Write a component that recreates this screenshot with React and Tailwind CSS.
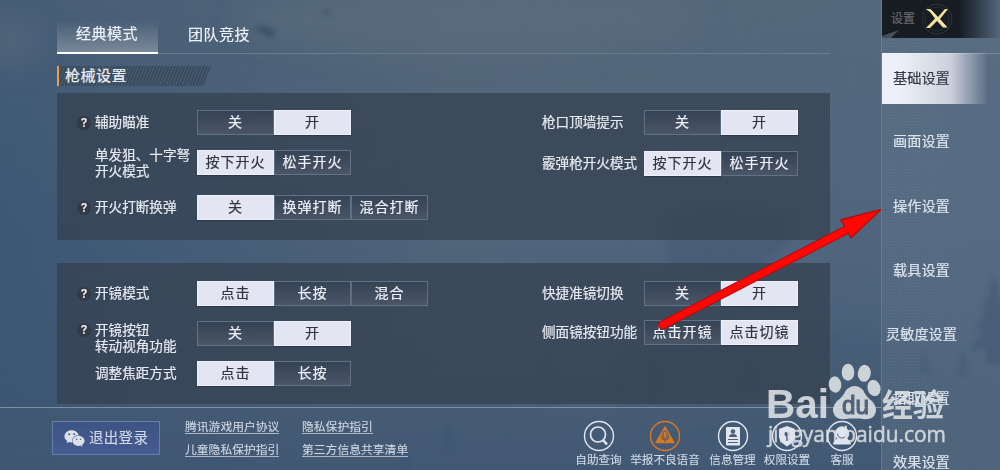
import React from "react";
import { FaWeixin } from "react-icons/fa";

const leftSettings = {
  weapon: [
    { y: "mt-[17px]", help: true, lines: ["辅助瞄准"], options: ["关", "开"], active: 1 },
    { y: "mt-[15px]", lines: ["单发狙、十字弩", "开火模式"], options: ["按下开火", "松手开火"], active: 0 },
    { y: "mt-[20px]", help: true, lines: ["开火打断换弹"], options: ["关", "换弹打断", "混合打断"], active: 0 },
  ],
  scope: [
    { y: "mt-[18px]", help: true, lines: ["开镜模式"], options: ["点击", "长按", "混合"], active: 0 },
    { y: "mt-[15px]", help: true, low: true, lines: ["开镜按钮", "转动视角功能"], options: ["关", "开"], active: 1 },
    { y: "mt-[15px]", lines: ["调整焦距方式"], options: ["点击", "长按"], active: 0 },
  ],
};

const rightSettings = {
  weapon: [
    { y: "mt-[17px]", lines: ["枪口顶墙提示"], options: ["关", "开"], active: 1 },
    { y: "mt-[16px]", lines: ["霰弹枪开火模式"], options: ["按下开火", "松手开火"], active: 0 },
  ],
  scope: [
    { y: "mt-[18px]", lines: ["快捷准镜切换"], options: ["关", "开"], active: 1 },
    { y: "mt-[14px]", lines: ["侧面镜按钮功能"], options: ["点击开镜", "点击切镜"], active: 1 },
  ],
};

function Tree({ x, y, s, o }) {
  return (
    <path
      transform={`translate(${x} ${y}) scale(${s})`}
      opacity={o}
      fill="#2d4660"
      d="M0-50L4-38L2-38L9-25L5-26L14-10L7-12L18 5L6 2L6 14L-6 14L-6 2L-18 5L-7-12L-14-10L-5-26L-9-25L-2-38L-4-38Z"
    />
  );
}

function Scenery() {
  return (
    <svg className="absolute inset-0" width="1000" height="470" viewBox="0 0 1000 470">
      <defs>
        <filter id="soft"><feGaussianBlur stdDeviation="14" /></filter>
        <filter id="mist"><feGaussianBlur stdDeviation="2.2" /></filter>
      </defs>
      <g filter="url(#soft)">
        <ellipse cx="10" cy="42" rx="30" ry="24" fill="#5d6b7d" opacity=".5" />
        <ellipse cx="470" cy="20" rx="230" ry="34" fill="#5b7080" opacity=".55" />
        <ellipse cx="800" cy="380" rx="160" ry="50" fill="#3b5571" opacity=".35" />
      </g>
      <g filter="url(#mist)">
        <path d="M254 27Q266 22 276 32L272 38Q262 36 254 27Z" fill="#34495f" opacity=".6" />
        <path d="M322 9L331 12L328 16Z" fill="#34495f" opacity=".7" />
        <path d="M0 445L120 440L280 424L390 440L520 420L720 425L870 395L1000 375V470H0Z" fill="#3f5873" opacity=".28" />
        <path d="M664 220L700 203L742 208L790 215L788 242L752 275L670 265Z" fill="#2d4257" opacity=".16" />
        <Tree x="448" y="444" s=".55" o=".35" />
        <Tree x="546" y="392" s=".8" o=".25" />
        <Tree x="615" y="390" s=".6" o=".2" />
        <Tree x="654" y="388" s=".8" o=".25" />
        <Tree x="750" y="385" s=".7" o=".2" />
        <Tree x="925" y="370" s=".4" o=".35" />
        <Tree x="963" y="372" s=".45" o=".4" />
        <Tree x="994" y="345" s="1.4" o=".55" />
        <Tree x="405" y="466" s=".5" o=".3" />
        <Tree x="210" y="462" s=".9" o=".15" />
      </g>
    </svg>
  );
}

function Toggle({ options, active }) {
  return (
    <div className="flex h-[25px]">
      {options.map((name, i) => (
        <div
          key={name}
          className={
            "flex h-[25px] w-[77px] items-center justify-center border pb-px text-[14px] tracking-[1px] whitespace-nowrap " +
            (i === active
              ? "border-[#eef0fa] bg-[#e3e6f2] text-[#30353f] shadow-[0_1px_1px_rgba(30,40,55,.5)]"
              : "border-[#5f7288] bg-linear-to-b from-[#364355] to-[#4a5566] text-[#eef1f7]" + (i > 0 ? " border-l-[#5b6d82]" : ""))
          }
        >
          {name}
        </div>
      ))}
    </div>
  );
}

function Row({ item }) {
  return (
    <div className={"flex h-[25px] items-center " + item.y}>
      <div className={"mr-[4px] flex h-[14px] w-[14px] shrink-0 items-center justify-center rounded-full text-[12.500px] font-medium text-[#f1f1f3] " + (item.help ? "bg-[#333a45] " : "") + (item.low ? "-mt-[7px]" : "mt-px")}>
        {item.help ? "?" : ""}
      </div>
      <div className={"w-[102px] shrink-0 text-[13.600px] leading-[16px] whitespace-nowrap text-[#e6eaf1] " + (item.low ? "pt-[9px]" : item.lines.length > 1 ? "pt-[1px]" : "pb-px")}>
        {item.lines.map((line) => <div key={line}>{line}</div>)}
      </div>
      <Toggle options={item.options} active={item.active} />
    </div>
  );
}

function Panel({ id, size }) {
  return (
    <section className={"ml-[57px] flex w-[773px] bg-[#354150]/75 [-webkit-text-stroke:.2px] " + size}>
      <div className="w-[447px] pl-[20px]">
        {leftSettings[id].map((item) => <Row key={item.lines[0]} item={item} />)}
      </div>
      <div className="pl-[20px]">
        {rightSettings[id].map((item) => <Row key={item.lines[0]} item={item} />)}
      </div>
    </section>
  );
}

function Glyph({ kind }) {
  return (
    <svg width="32" height="32" viewBox="0 0 32 32" fill="none" stroke={kind === "voice" ? "#d87822" : "#dfe6f1"}>
      <circle cx="16" cy="16" r="14.5" strokeWidth="1.4" />
      {kind === "search" && (
        <g><circle cx="15" cy="14.5" r="7.500" strokeWidth="1.700" /><path d="M20 20L24 24.500" strokeWidth="2.600" /></g>
      )}
      {kind === "voice" && (
        <g>
          <path d="M16 6.500L25.300 22.700H6.700Z" fill="#d87822" strokeLinejoin="round" />
          <rect x="14" y="11" width="4" height="7.500" rx="2" fill="#d87822" stroke="#465a70" strokeWidth="1" />
          <path d="M12.500 15.500V17Q12.500 20 16 20T19.500 17V15.500M16 20V22" stroke="#465a70" />
        </g>
      )}
      {kind === "info" && (
        <g stroke="none">
          <rect x="9" y="7" width="14" height="18.500" rx="1" fill="#dfe6f1" />
          <circle cx="16" cy="11.500" r="2.300" fill="#4b5f76" />
          <path d="M12 17Q12 14 16 14T20 17Z" fill="#4b5f76" />
          <path d="M11 19.500H21M11 22.500H21" stroke="#4b5f76" strokeWidth="1.200" />
        </g>
      )}
      {kind === "shield" && (
        <g>
          <path d="M16 6L24 9V17Q23.500 22 16 26.500Q8.500 22 8 17V9Z" fill="#dfe6f1" stroke="none" />
          <circle cx="16" cy="14" r="2.500" fill="#4b5f76" stroke="none" />
          <path d="M16 15V21M16 19H18.500" stroke="#4b5f76" strokeWidth="1.600" />
        </g>
      )}
      {kind === "service" && (
        <g>
          <circle cx="16" cy="13.500" r="6.700" fill="#dfe6f1" />
          <path d="M7.500 24Q8.500 18.500 16 18.500T24.500 24Z" fill="#dfe6f1" />
          <path d="M11.500 13.500Q12 18 16 18T20.500 13.500" stroke="#4b5f76" />
        </g>
      )}
    </svg>
  );
}

const services = [
  ["search", "自助查询", "w-[55px]"],
  ["voice", "举报不良语音", "w-[78px]"],
  ["info", "信息管理", "w-[57px]"],
  ["shield", "权限设置", "w-[52px]"],
  ["service", "客服", "w-[58px]"],
];

const menu = ["画面设置", "操作设置", "载具设置", "灵敏度设置", "拾取设置", "效果设置"];

function Footer() {
  return (
    <footer className="flex h-[63px] border-t border-[#8090a3] bg-linear-to-b from-[#465b73]/60 to-[#405774]/60 [-webkit-text-stroke:.1px]">
      <button className="mt-[13px] ml-[52px] flex h-[34px] w-[108px] shrink-0 items-center border border-[#657fad] bg-linear-to-b from-[#3d5484] to-[#465b91] pl-[11px] text-[#d3daea]">
        <FaWeixin size={21} color="#dce1e9" />
        <span className="ml-[4px] pt-px text-[14.500px] tracking-[.3px] whitespace-nowrap">退出登录</span>
      </button>
      <div className="mt-[10px] ml-[25px] grid h-[46px] shrink-0 grid-cols-[117px_110px] text-[11.800px] leading-[18px] whitespace-nowrap text-[#d0d8e4]">
        <div><a className="inline-block h-[16px] border-b border-[#aab7c7]">腾讯游戏用户协议</a></div>
        <div><a className="inline-block h-[16px] border-b border-[#aab7c7]">隐私保护指引</a></div>
        <div><a className="inline-block h-[16px] border-b border-[#aab7c7]">儿童隐私保护指引</a></div>
        <div><a className="inline-block h-[16px] border-b border-[#aab7c7]">第三方信息共享清单</a></div>
      </div>
      <div className="mt-[12px] ml-[159px] flex">
        {services.map(([kind, name, width]) => (
          <div key={kind} className={"flex shrink-0 flex-col items-center text-[11.600px] leading-[16px] whitespace-nowrap text-[#d3dbe7] " + width}>
            <Glyph kind={kind} />
            <span>{name}</span>
          </div>
        ))}
      </div>
    </footer>
  );
}

function Sidebar() {
  return (
    <aside className="relative flex h-[470px] w-[119px] shrink-0 flex-col overflow-hidden border-l border-[#74879a]/60 bg-[#62758a]/35 text-[14.200px] text-[#dce3ec] [-webkit-text-stroke:.2px]">
      <div className="absolute inset-0 mask-[linear-gradient(to_right,black_35%,transparent_75%)] bg-[radial-gradient(circle,rgba(140,155,172,.18)_.8px,transparent_1px)] bg-size-[3px_3px]" />
      <header className="relative flex h-[38px] shrink-0 items-center bg-linear-to-r from-[#171c23] from-65% to-[#53677c] pl-[9px]">
        <span className="text-[12px] text-[#66686c]">设置</span>
        <svg className="ml-[7px]" width="34" height="36" viewBox="0 0 34 36" fill="none">
          <circle cx="15" cy="18" r="15" stroke="#30343a" />
          <circle cx="15" cy="18" r="12" stroke="#292e34" />
          <path d="M4 8L9 8.500L16 16L23 8H26L18 18L25.500 26.500H21L15 20L8 27H4L13 17.500L8 11Z" fill="#f6df9b" />
          <path d="M5 8.500L9 9.500L24 26" stroke="#fff4c9" />
        </svg>
        <svg className="absolute bottom-0 left-0" width="18" height="8"><path d="M0 6L17 0L9 8H0Z" fill="#494f58" /></svg>
      </header>
      <div className="relative mt-[15px] flex h-[51px] shrink-0 items-center border-t border-white/20 bg-linear-to-r from-[#edf0fa] from-15% via-[#cbd1dc] via-58% to-transparent to-90% pb-[1px] pl-[11px] text-[#363a45]">基础设置</div>
      <nav className="relative mt-[6px] shrink-0">
        {menu.map((name) => (
          <div key={name} className={"flex h-[64.200px] items-center whitespace-nowrap " + (name.length > 4 ? "pl-[4px]" : "pl-[11px]")}>{name}</div>
        ))}
      </nav>
    </aside>
  );
}

function Arrow() {
  return (
    <svg className="absolute inset-0" width="1000" height="470" viewBox="0 0 1000 470">
      <g stroke="#b30f14" fill="#b30f14" strokeLinejoin="round">
        <path d="M662.500 325L849 228.500" strokeWidth="9" strokeLinecap="round" />
        <path d="M880 210L841 220L847 229L851 237.500Z" strokeWidth="2" />
      </g>
      <g fill="#ff0803">
        <path d="M662.500 325L850 228" stroke="#ff0803" strokeWidth="6.800" strokeLinecap="round" />
        <path d="M879 210.500L842 220.500L847 229L851.500 236.500Z" />
      </g>
    </svg>
  );
}

function BaiduMark() {
  return (
    <svg className="absolute inset-0" width="1000" height="470" viewBox="0 0 1000 470" fill="#dfe3e6">
      <g opacity=".88">
        <text x="766" y="418" fontSize="40.500" fontWeight="700" fontFamily="Liberation Sans, Arial, sans-serif" textLength="63" lengthAdjust="spacingAndGlyphs">Bai</text>
        <ellipse cx="835" cy="384.500" rx="6.300" ry="8.200" transform="rotate(-8 835 384.500)" />
        <ellipse cx="848" cy="372.300" rx="6.300" ry="8.500" />
        <ellipse cx="864.300" cy="373.300" rx="6.500" ry="8.500" transform="rotate(8 864.300 373.300)" />
        <ellipse cx="874" cy="388" rx="6.500" ry="8.200" transform="rotate(-15 874 388)" />
        <path d="M846 390Q855 382 863 390Q866 397 872 401Q879 409 874 416Q869 421 860 418.500H849Q840 421 835 416Q830 409 837 401Q843 397 846 390Z" />
        <text x="842" y="414" fontSize="25" fontFamily="Liberation Sans, Arial, sans-serif" textLength="27" lengthAdjust="spacingAndGlyphs" fill="#50647a" stroke="#50647a" strokeWidth="1.100">du</text>
        <text x="882" y="416" fontSize="31" fontWeight="700" fontFamily="Noto Sans CJK SC, sans-serif" textLength="62">经验</text>
        <text x="768" y="442" fontSize="22.500" fontFamily="Open Sans, sans-serif" textLength="178" lengthAdjust="spacingAndGlyphs" stroke="#dfe3e6" strokeWidth=".5">jingyan.baidu.com</text>
      </g>
    </svg>
  );
}

export default function App() {
  return (
    <div className="relative flex h-[470px] w-[1000px] overflow-hidden bg-linear-to-r from-[#3c5775] via-[#50647a] via-45% to-[#4f667f] font-['Roboto','Noto_Sans_CJK_SC',sans-serif]">
      <div className="absolute inset-0 bg-linear-to-b from-[#627078]/25 via-transparent to-[#3b526e]/45" />
      <Scenery />
      <main className="relative w-[881px] shrink-0">
        <div className="h-[407px] overflow-hidden">
          <div className="ml-[57px] flex h-[54px] w-[773px] border-b border-[#687c90] pt-[21px] text-[15px] tracking-[.5px] text-[#edf1f6] [-webkit-text-stroke:.2px]">
            <div className="flex h-[33px] w-[101px] items-center justify-center border-b-2 border-white bg-linear-to-b from-[#66758a]/5 to-[#8b96a4]/75 pr-px pb-[4px]">经典模式</div>
            <div className="ml-[30px] flex h-[28px] items-center">团队竞技</div>
          </div>
          <div className="mt-[12px] ml-[57px] flex h-[20px] w-[154px] items-center border-l-2 border-[#ef9d48] bg-[repeating-linear-gradient(110deg,#3a4d60_0px,#3a4d60_2px,#485b6e_2px,#485b6e_3px)] pl-[6px] text-[15px] tracking-[.5px] text-[#edf1f6] [-webkit-text-stroke:.2px] [clip-path:polygon(0_0,100%_0,95%_100%,0_100%)]">枪械设置</div>
          <div className="h-[7px]" />
          <Panel id="weapon" size="h-[147px]" />
          <div className="h-[23px]" />
          <Panel id="scope" size="h-[141px]" />
        </div>
        <Footer />
      </main>
      <Sidebar />
      <Arrow />
      <BaiduMark />
    </div>
  );
}
